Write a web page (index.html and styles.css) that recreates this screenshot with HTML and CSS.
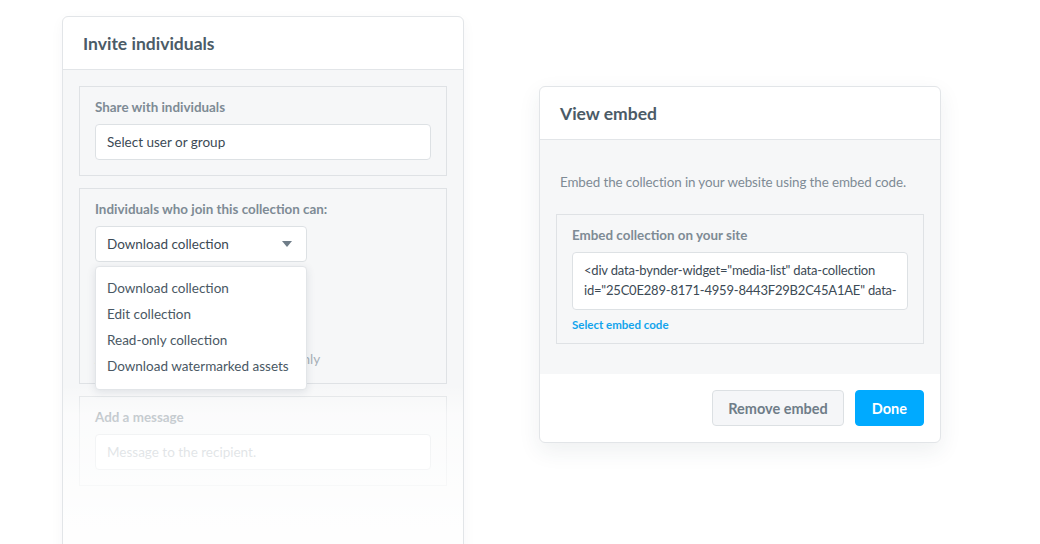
FILE: index.html
```html
<!DOCTYPE html>
<html>
<head>
<meta charset="utf-8">
<link rel="stylesheet" href="styles.css">
</head>
<body>
<div class="page">
  <div class="card card-invite">
    <div class="card-head"><h2 class="title">Invite individuals</h2></div>
    <div class="card-body">
      <div class="group">
        <div class="label">Share with individuals</div>
        <div class="input">Select user or group</div>
      </div>
      <div class="group group-perms">
        <div class="label">Individuals who join this collection can:</div>
        <div class="select-wrap">
          <div class="select">
            <span>Download collection</span>
            <svg class="caret" width="10" height="6" viewBox="0 0 10 6"><path d="M0 0h10L5 6z" fill="#6f7d88"/></svg>
          </div>
          <div class="menu">
            <div class="menu-item">Download collection</div>
            <div class="menu-item">Edit collection</div>
            <div class="menu-item">Read-only collection</div>
            <div class="menu-item">Download watermarked assets</div>
          </div>
        </div>
        <div class="hidden-note">Allow download of this collection only</div>
      </div>
      <div class="group">
        <div class="label">Add a message</div>
        <div class="input placeholder">Message to the recipient.</div>
      </div>
    </div>
    <div class="fade"></div>
  </div>

  <div class="card card-embed">
    <div class="card-head"><h2 class="title">View embed</h2></div>
    <div class="card-body embed-body">
      <p class="intro">Embed the collection in your website using the embed code.</p>
      <div class="group group-embed">
        <div class="label">Embed collection on your site</div>
        <div class="code">&lt;div data-bynder-widget="media-list" data-collection id="25C0E289-8171-4959-8443F29B2C45A1AE" data-</div>
        <a class="link">Select embed code</a>
      </div>
    </div>
    <div class="card-foot">
      <button class="btn btn-secondary">Remove embed</button>
      <button class="btn btn-primary">Done</button>
    </div>
  </div>
</div>
</body>
</html>
```

FILE: styles.css
```css
* { box-sizing: border-box; }
html, body {
  margin: 0;
  padding: 0;
  width: 1040px;
  height: 544px;
  overflow: hidden;
  background: #ffffff;
  font-family: Lato, "Liberation Sans", sans-serif;
}
.page {
  display: flex;
  align-items: flex-start;
  padding-left: 62px;
  gap: 75px;
}
.card {
  width: 402px;
  background: #ffffff;
  border: 1px solid #e2e5e8;
  border-radius: 6px;
  overflow: hidden;
}
.card-invite {
  position: relative;
  margin-top: 16px;
  height: 560px;
  box-shadow: 0 4px 14px rgba(40, 60, 80, 0.04);
}
.card-embed {
  margin-top: 86px;
  box-shadow: 0 8px 22px rgba(40, 60, 80, 0.08);
}
.card-head {
  height: 53px;
  border-bottom: 1px solid #e2e5e8;
  padding: 0 20px;
  display: flex;
  align-items: center;
}
.title {
  margin: 0;
  font-size: 17.5px;
  font-weight: 700;
  color: #4b5b67;
}
.card-body {
  background: #f6f7f8;
  padding: 16px 16px 0;
  display: flex;
  flex-direction: column;
  gap: 12px;
  height: 100%;
}
.group {
  border: 1px solid #dfe2e5;
  padding: 12px 15px 15px;
}
.label {
  font-size: 13.4px;
  font-weight: 700;
  color: #7e8b95;
  line-height: 16px;
  margin-bottom: 9px;
}
.input {
  height: 36px;
  background: #ffffff;
  border: 1px solid #dde1e4;
  border-radius: 4px;
  padding: 0 11px;
  display: flex;
  align-items: center;
  font-size: 13.5px;
  color: #3c4a55;
}
.input.placeholder { color: #a9b3ba; }
.group-perms { height: 196px; }
.select-wrap {
  position: relative;
  width: 212px;
}
.select {
  height: 36px;
  background: #ffffff;
  border: 1px solid #dde1e4;
  border-radius: 4px;
  padding: 0 14px 0 11px;
  display: flex;
  align-items: center;
  justify-content: space-between;
  font-size: 13.5px;
  color: #3c4a55;
}
.menu {
  position: absolute;
  top: 40px;
  left: 0;
  width: 212px;
  background: #ffffff;
  border: 1px solid #e2e5e8;
  border-radius: 4px;
  box-shadow: 0 2px 8px rgba(40, 60, 80, 0.12);
  padding: 8px 0 10px;
  z-index: 3;
}
.menu-item {
  height: 26px;
  line-height: 26px;
  padding: 0 11px;
  font-size: 13.5px;
  color: #4a5864;
  white-space: nowrap;
}
.hidden-note {
  margin-top: 89px;
  font-size: 13.5px;
  color: #a7b0b7;
  white-space: nowrap;
}
.fade {
  position: absolute;
  left: 0;
  right: 0;
  top: 368px;
  bottom: 0;
  background: linear-gradient(to bottom, rgba(255,255,255,0) 0px, rgba(255,255,255,0.55) 30px, rgba(255,255,255,0.75) 100px, rgba(255,255,255,0.95) 170px);
  z-index: 2;
}
.embed-body {
  height: auto;
  padding: 32px 16px 30px;
  gap: 0;
}
.intro {
  margin: 0 0 22px 4px;
  font-size: 13.4px;
  letter-spacing: -0.1px;
  color: #7e8b95;
  line-height: 20px;
  white-space: nowrap;
}
.group-embed { padding-bottom: 12px; }
.code {
  background: #ffffff;
  border: 1px solid #dde1e4;
  border-radius: 4px;
  padding: 7px 4px 7px 11px;
  font-size: 13px;
  letter-spacing: -0.2px;
  line-height: 20px;
  color: #3c4a55;
  height: 58px;
  overflow: hidden;
}
.link {
  display: block;
  margin-top: 8px;
  font-size: 11.5px;
  font-weight: 700;
  color: #12a4ec;
}
.card-foot {
  display: flex;
  justify-content: flex-end;
  gap: 11px;
  padding: 16px 16px 16px;
}
.btn {
  height: 36px;
  border-radius: 4px;
  font-family: inherit;
  font-size: 14.5px;
  font-weight: 700;
  padding: 0 15px;
  cursor: pointer;
}
.btn-secondary {
  background: #f5f6f8;
  border: 1px solid #dce0e3;
  color: #6f7d88;
}
.btn-primary {
  background: #00aaff;
  border: 1px solid #00aaff;
  color: #ffffff;
  padding: 0 16px;
}
```
